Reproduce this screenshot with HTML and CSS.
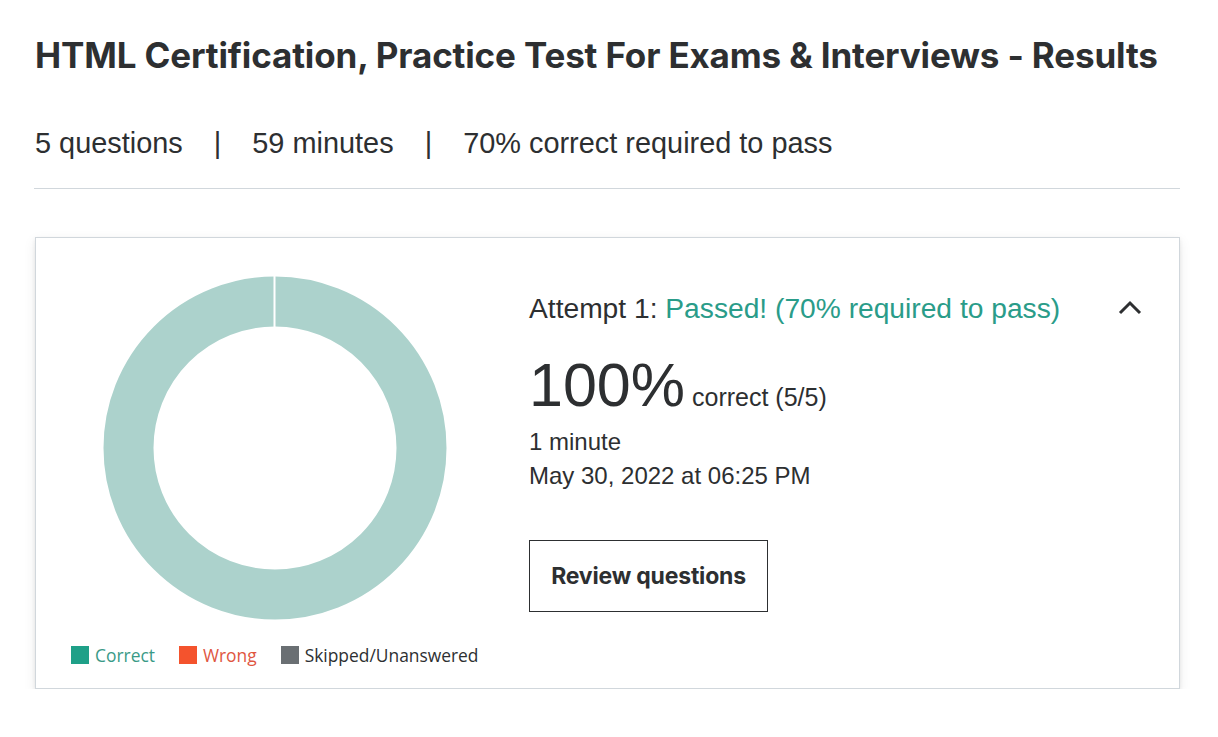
FILE: index.html
```html
<!DOCTYPE html>
<html lang="en">
<head>
<meta charset="utf-8">
<title>Results</title>
<link rel="stylesheet" href="styles.css">
</head>
<body>
<main class="page">
  <h1 class="title">HTML Certification, Practice Test For Exams &amp; Interviews - Results</h1>
  <div class="meta">
    <span>5 questions</span><span class="sep">|</span><span>59 minutes</span><span class="sep">|</span><span>70% correct required to pass</span>
  </div>
  <hr class="rule">
  <section class="card">
    <div class="chart-col">
      <svg class="donut" width="344" height="344" viewBox="0 0 344 344">
        <circle cx="172" cy="172" r="146.5" fill="none" stroke="#acd2cc" stroke-width="50"/>
        <rect x="170.5" y="0" width="2" height="51" fill="#fff"/>
      </svg>
      <ul class="legend">
        <li class="lg lg-correct"><span class="sw"></span>Correct</li>
        <li class="lg lg-wrong"><span class="sw"></span>Wrong</li>
        <li class="lg lg-skip"><span class="sw"></span>Skipped/Unanswered</li>
      </ul>
    </div>
    <div class="info-col">
      <div class="attempt-row">
        <div class="attempt">Attempt 1: <span class="passed">Passed! (70% required to pass)</span></div>
        <svg class="chev" width="24" height="16" viewBox="0 0 24 16"><path d="M2 13 L12 3 L22 13" fill="none" stroke="#2d2f31" stroke-width="3"/></svg>
      </div>
      <div class="score"><span class="pct">100%</span><span class="frac">correct (5/5)</span></div>
      <div class="line first">1 minute</div>
      <div class="line">May 30, 2022 at 06:25 PM</div>
      <button class="review">Review questions</button>
    </div>
  </section>
</main>
</body>
</html>
```
FILE: styles.css
```css
* { box-sizing: border-box; }
body {
  margin: 0;
  background: #fff;
  color: #2d2f31;
  font-family: "Liberation Sans", Arial, sans-serif;
}
.page {
  padding: 30px 38px 0 34px;
}
.title {
  margin: 0 0 0 1px;
  font-family: Inter, "Liberation Sans", sans-serif;
  font-weight: 700;
  font-size: 35px;
  line-height: 50px;
  letter-spacing: -0.14px;
}
.meta {
  margin-top: 45px;
  font-size: 28.9px;
  line-height: 36px;
  display: flex;
  padding-left: 1px;
}
.sep {
  margin: 0 31px;
}
.rule {
  margin: 27px 0 0 0;
  border: 0;
  border-top: 1px solid #d1d7dc;
}
.card {
  margin-top: 48px;
  margin-left: 1px;
  border: 1px solid #d1d7dc;
  box-shadow: 0 2px 4px rgba(0,0,0,0.08), 0 4px 12px rgba(0,0,0,0.08);
  display: flex;
  height: 452px;
}
.chart-col {
  width: 493px;
  display: flex;
  flex-direction: column;
  align-items: center;
  padding-top: 38px;
}
.donut {
  display: block;
  margin-left: -16px;
}
.legend {
  list-style: none;
  margin: 24px 0 0 0;
  padding: 0 0 0 35px;
  align-self: flex-start;
  display: flex;
  gap: 24px;
  font-family: "Open Sans", sans-serif;
  font-size: 17.4px;
  line-height: 22px;
}
.lg { display: flex; align-items: center; }
.sw { width: 18px; height: 18px; margin-right: 6px; display: inline-block; }
.lg-correct { color: #3a9a87; }
.lg-correct .sw { background: #1fa088; }
.lg-wrong { color: #e0563f; }
.lg-wrong .sw { background: #f4532d; }
.lg-skip { color: #2d2f31; }
.lg-skip .sw { background: #6a6f73; }
.info-col {
  flex: 1;
  padding: 52px 36px 0 0;
  display: flex;
  flex-direction: column;
  align-items: flex-start;
}
.attempt-row {
  width: 100%;
  display: flex;
  justify-content: space-between;
  align-items: center;
}
.attempt {
  font-size: 28.2px;
  line-height: 36px;
}
.passed { color: #2a9c89; }
.chev { display: block; margin-right: 1px; }
.score {
  margin-top: 24px;
  display: flex;
  align-items: baseline;
}
.pct {
  font-size: 61px;
  line-height: 70px;
  letter-spacing: 0;
}
.frac {
  font-size: 25px;
  margin-left: 7px;
}
.line {
  font-size: 24px;
  line-height: 34px;
}
.line.first { margin-top: 5px; }
.review {
  margin-top: 47px;
  width: 239px;
  height: 72px;
  background: #fff;
  border: 1px solid #2d2f31;
  font-family: Inter, "Liberation Sans", sans-serif;
  font-weight: 700;
  font-size: 23px;
  letter-spacing: -0.2px;
  color: #2d2f31;
  padding: 0;
}
```
